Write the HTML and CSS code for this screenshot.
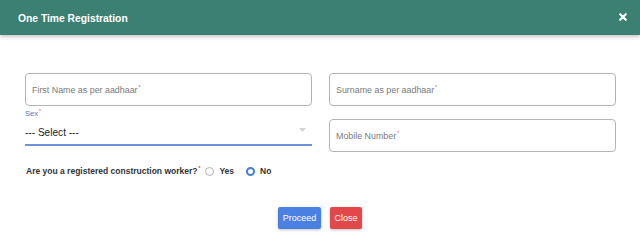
FILE: index.html
```html
<!DOCTYPE html>
<html>
<head>
<meta charset="utf-8">
<link rel="stylesheet" href="styles.css">
</head>
<body>
<div class="modal">
  <div class="modal-header">
    <span class="title">One Time Registration</span>
    <svg class="close-x" width="8" height="8" viewBox="0 0 8 8"><path d="M1.2 1.2 L6.8 6.8 M6.8 1.2 L1.2 6.8" stroke="#fff" stroke-width="2.1" stroke-linecap="round"/></svg>
  </div>
  <div class="modal-body">
    <div class="form-grid">
      <div class="col">
        <div class="field"><span class="ph">First Name as per aadhaar</span><sup class="req">*</sup></div>
        <div class="sex-label">Sex<sup class="req">*</sup></div>
        <div class="select">
          <span class="sel-text">--- Select ---</span>
          <svg class="caret" width="7" height="4" viewBox="0 0 7 4"><path d="M0 0 L7 0 L3.5 4 Z" fill="#d4d4d4"/></svg>
        </div>
      </div>
      <div class="col gap">
        <div class="field"><span class="ph">Surname as per aadhaar</span><sup class="req">*</sup></div>
        <div class="field"><span class="ph">Mobile Number</span><sup class="req">*</sup></div>
      </div>
    </div>
    <div class="question">
      <span class="q-text">Are you a registered construction worker?<sup class="req">*</sup></span>
      <span class="radio"></span><span class="r-label">Yes</span>
      <span class="radio checked"></span><span class="r-label">No</span>
    </div>
    <div class="actions">
      <button class="btn btn-primary">Proceed</button>
      <button class="btn btn-danger">Close</button>
    </div>
  </div>
</div>
</body>
</html>
```

FILE: styles.css
```css
html, body {
  margin: 0;
  padding: 0;
  background: #fff;
  font-family: "Liberation Sans", Arial, Helvetica, sans-serif;
}
.modal {
  width: 640px;
  height: 246px;
  background: #fff;
}
.modal-header {
  height: 35px;
  background: #3b8072;
  display: flex;
  align-items: center;
  justify-content: space-between;
  padding: 0 13px 0 18px;
  box-shadow: 0 2px 4px rgba(0,0,0,0.22);
  position: relative;
}
.title {
  color: #fff;
  font-weight: bold;
  font-size: 10.3px;
  margin-top: 1px;
}
.close-x {
  margin-top: -2px;
}
.modal-body {
  padding: 38px 24px 0 25px;
}
.form-grid {
  display: grid;
  grid-template-columns: 287px 287px;
  column-gap: 17px;
}
.col {
  display: flex;
  flex-direction: column;
}
.col.gap {
  gap: 13px;
}
.field {
  box-sizing: border-box;
  height: 33px;
  border: 1px solid #b4b4b4;
  border-radius: 4px;
  display: flex;
  align-items: center;
  padding-left: 6px;
}
.ph {
  color: #7a7a7a;
  font-size: 8.9px;
}
.req {
  color: #d93a3a;
  font-size: 5px;
  vertical-align: top;
  line-height: 1;
}
.field .req {
  align-self: flex-start;
  margin-top: 11px;
  margin-left: 1px;
}
.sex-label {
  color: #4a78c8;
  font-size: 7.5px;
  line-height: 9px;
  margin-top: 3px;
}
.sex-label .req {
  margin-left: 1px;
}
.select {
  box-sizing: border-box;
  height: 28px;
  border-bottom: 2px solid #6b94dc;
  display: flex;
  align-items: center;
  justify-content: space-between;
  padding: 2px 6px 0 0;
}
.sel-text {
  color: #222;
  font-size: 10.1px;
}
.caret {
  margin-top: -5px;
}
.question {
  display: flex;
  align-items: center;
  height: 12px;
  margin-top: 13px;
  padding-left: 1px;
}
.q-text {
  font-weight: bold;
  font-size: 8.5px;
  color: #333;
}
.q-text .req {
  margin-left: 1px;
}
.radio {
  box-sizing: border-box;
  width: 9px;
  height: 9px;
  border-radius: 50%;
  border: 1px solid #b0b0b0;
  background: #fff;
  margin-left: 5px;
}
.radio.checked {
  border: 2.6px solid #3f7ee0;
  margin-left: 12px;
}
.r-label {
  font-weight: bold;
  font-size: 8.5px;
  color: #333;
  margin-left: 5px;
}
.actions {
  display: flex;
  justify-content: center;
  gap: 9px;
  margin-top: 30px;
  padding-right: 1px;
}
.btn {
  height: 22px;
  border: none;
  border-radius: 2px;
  color: #fff;
  font-family: "Liberation Sans", Arial, sans-serif;
  font-size: 9px;
  padding: 0;
  box-shadow: 0 1px 3px rgba(0,0,0,0.25);
}
.btn-primary {
  width: 43px;
  background: #4a80e2;
}
.btn-danger {
  width: 32px;
  background: #e2474a;
}
```
